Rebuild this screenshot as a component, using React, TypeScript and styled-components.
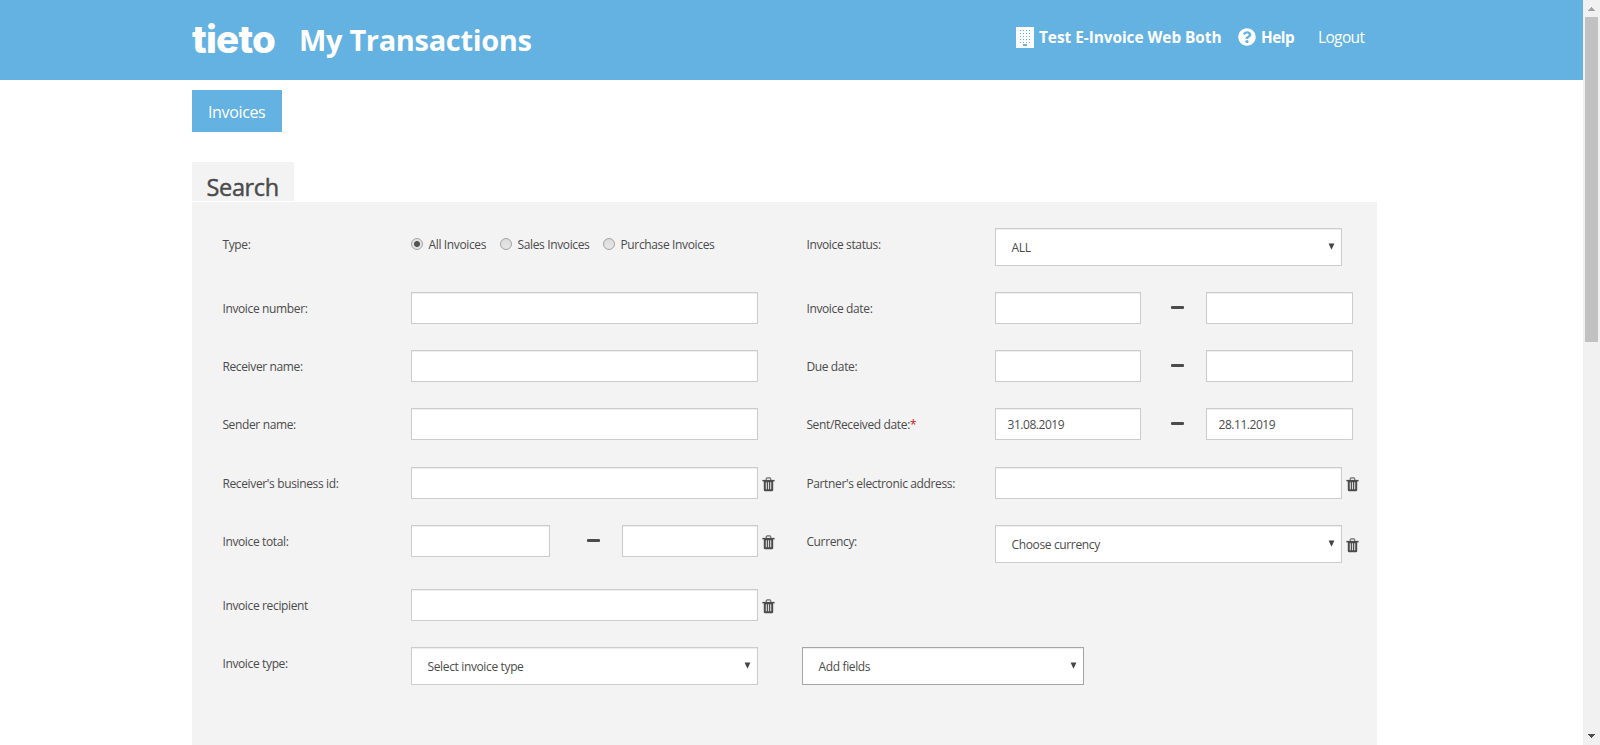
import React from "react";
import styled, { createGlobalStyle, css } from "styled-components";
import { FaQuestionCircle } from "react-icons/fa";

const BLUE = "#63b2e2";
const INK = "#4b4b4b";

const GlobalStyle = createGlobalStyle`
  *, *::before, *::after { box-sizing: border-box; }
  body {
    margin: 0;
    background: #fff;
    color: ${INK};
    font-family: "Open Sans", "Noto Sans", sans-serif;
    font-size: 12px;
    letter-spacing: -0.36px;
  }
`;

const Window = styled.div`
  display: flex;
  height: 745px;
  overflow: hidden;
`;

const Page = styled.div`
  flex: 1;
  display: flex;
  flex-direction: column;
  min-width: 0;
`;

const Header = styled.header`
  height: 80px;
  flex: none;
  background: ${BLUE};
  color: #fff;
`;

const Container = styled.div`
  width: 1185px;
  margin-left: 192px;
`;

const HeaderBar = styled(Container)`
  display: flex;
  align-items: flex-start;
  height: 80px;
`;

const Logo = styled.div`
  width: 107px;
  padding-top: 17px;
  font: 800 38.5px/44px Inter, sans-serif;
  letter-spacing: -0.75px;
`;

const Title = styled.h1`
  flex: 1;
  margin: 0;
  padding-top: 20px;
  font-size: 29px;
  line-height: 40px;
  font-weight: 700;
  letter-spacing: -0.33px;
`;

const UserNav = styled.nav`
  display: flex;
  width: 361px;
  padding-top: 27px;
  line-height: 21px;
  white-space: nowrap;
`;

const Company = styled.a`
  display: flex;
  gap: 5px;
  width: 222px;
  font-size: 15.4px;
  line-height: 22px;
  font-weight: 700;
  letter-spacing: -0.04px;
`;

const HelpLink = styled.a`
  display: flex;
  gap: 5px;
  width: 80px;
  font-size: 15.3px;
  line-height: 20px;
  font-weight: 700;
  letter-spacing: -0.5px;
  svg { margin-top: 1px; }
`;

const LogoutLink = styled.a`
  font-size: 15.5px;
  line-height: 20px;
  letter-spacing: -0.65px;
`;

const NavTab = styled.a`
  display: block;
  width: 90px;
  height: 42px;
  margin-top: 10px;
  padding-left: 16px;
  background: ${BLUE};
  color: #fff;
  font-size: 16px;
  line-height: 44px;
  letter-spacing: -0.36px;
`;

const PanelTab = styled.h2`
  width: 102px;
  height: 39px;
  margin: 30px 0 1px;
  padding-left: 14.5px;
  background: #f3f3f3;
  font-size: 23.5px;
  line-height: 50px;
  font-weight: 400;
  -webkit-text-stroke: 0.45px ${INK};
  letter-spacing: -0.35px;
`;

const Panel = styled.form`
  display: grid;
  grid-template-columns: 189px 395px 189px 1fr;
  grid-template-rows: 38px 32px 32px 33px 32px 38px 32px 38px;
  row-gap: 26px;
  align-items: start;
  height: 560px;
  padding: 26px 0 0 30px;
  background: #f3f3f3;
`;

const Label = styled.label`
  padding-left: 0.4px;
  line-height: 34px;
  white-space: nowrap;
`;

const Required = styled.span`
  color: #c4161c;
`;

const Field = styled.div`
  display: flex;
  align-items: flex-start;
`;

const box = css`
  background: #fff;
  border: 1px solid #ccc;
  box-shadow: inset 0 1px 1px rgba(0, 0, 0, 0.075);
`;

const TextBox = styled.div<{ $w?: number }>`
  ${box}
  width: ${(p) => p.$w ?? 347}px;
  height: 32px;
  padding-left: 11.5px;
  line-height: 32px;
  letter-spacing: -0.46px;
`;

const SelectBox = styled.div<{ $w?: number; $strong?: boolean }>`
  ${box}
  display: flex;
  justify-content: space-between;
  width: ${(p) => p.$w ?? 347}px;
  height: 38px;
  padding: 0 6px 0 15.5px;
  line-height: 38px;
  ${(p) => p.$strong && "border-color: #a5a5a5;"}
  svg { margin-top: 14px; }
`;

const Dash = styled.span<{ $before: number }>`
  width: 13px;
  height: 3px;
  margin: 14px 22px 0 ${(p) => p.$before}px;
  border-radius: 1px;
  background: ${INK};
`;

const Radios = styled.div`
  display: flex;
  line-height: 34px;
`;

const RadioOption = styled.label<{ $w: number }>`
  display: flex;
  gap: 5.5px;
  width: ${(p) => p.$w}px;
  white-space: nowrap;
`;

const RadioMark = styled.span<{ $on?: boolean }>`
  flex: none;
  width: 12px;
  height: 12px;
  margin-top: 10px;
  border: 1px solid #a3a3a3;
  border-radius: 50%;
  background: ${(p) =>
    p.$on
      ? "radial-gradient(circle, #555 0 2.6px, #e4e4e4 3.4px)"
      : "linear-gradient(#dcdcdc, #e6e6e6)"};
`;

const TrashButton = styled.span<{ $top?: number }>`
  margin: ${(p) => p.$top ?? 10}px 0 0 4px;
  line-height: 0;
`;

const AddFields = styled.div`
  grid-column: 3 / 5;
  margin-left: -4px;
`;

const Blank = styled.div`
  grid-column: 3 / 5;
`;

const Scrollbar = styled.div`
  display: flex;
  flex-direction: column;
  align-items: center;
  width: 17px;
  padding: 7px 0;
  background: #f1f1f1;
`;

const Thumb = styled.div`
  width: 13px;
  height: 325px;
  margin: 6px 0 auto;
  background: #c1c1c1;
`;

const Caret = () => (
  <svg width="7" height="7" viewBox="0 0 7 7">
    <path d="M0.6 0.6h5.8L3.5 6.8z" fill="#444" />
  </svg>
);

const Trash = ({ top }: { top?: number }) => (
  <TrashButton $top={top}>
    <svg width="13" height="15" viewBox="0 0 13 15">
      <path d="M4.2 3.4V2q0-1.1 1.1-1.1h2.4q1.1 0 1.1 1.1v1.4" fill="none" stroke="#6a6a6a" strokeWidth="1.1" />
      <rect x="0.4" y="2.9" width="12.2" height="1.5" fill={INK} />
      <path d="M1.8 4h9.4v9q0 1.3-1.3 1.3H3.1q-1.3 0-1.3-1.3z" fill={INK} />
      <path d="M4.3 5.3v7M6.5 5.3v7M8.7 5.3v7" stroke="#dcdcdc" strokeWidth="1.1" />
    </svg>
  </TrashButton>
);

const Building = () => (
  <svg width="18" height="21" viewBox="0 0 18 21">
    <rect width="18" height="21" fill="#fff" />
    {[3, 6, 9, 12, 15].map((y) =>
      [4, 7, 10, 13].map((x) => <rect key={`${x}-${y}`} x={x} y={y} width="1" height="1" fill={BLUE} />)
    )}
    <rect x="7" y="17" width="4" height="2" fill={BLUE} />
  </svg>
);

const ScrollArrow = ({ down }: { down?: boolean }) => (
  <svg width="7" height="4" viewBox="0 0 7 4" shapeRendering="crispEdges">
    <path d={down ? "M0 0h7v1h-1v1h-1v1h-1v1h-1v-1h-1v-1h-1v-1h-1z" : "M0 4h7v-1h-1v-1h-1v-1h-1v-1h-1v1h-1v1h-1v1h-1z"} fill={down ? "#505050" : "#a3a3a3"} />
  </svg>
);

const DateRange = ({ from, to }: { from?: string; to?: string }) => (
  <Field>
    <TextBox $w={146}>{from}</TextBox>
    <Dash $before={30} />
    <TextBox $w={147}>{to}</TextBox>
  </Field>
);

export default function App() {
  return (
    <Window>
      <GlobalStyle />
      <Page>
        <Header>
          <HeaderBar>
            <Logo>tieto</Logo>
            <Title>My Transactions</Title>
            <UserNav>
              <Company><Building />Test E-Invoice Web Both</Company>
              <HelpLink><FaQuestionCircle size={18} />Help</HelpLink>
              <LogoutLink>Logout</LogoutLink>
            </UserNav>
          </HeaderBar>
        </Header>
        <Container>
          <NavTab>Invoices</NavTab>
          <PanelTab>Search</PanelTab>
          <Panel>
            <Label>Type:</Label>
            <Radios>
              <RadioOption $w={89}><RadioMark $on />All Invoices</RadioOption>
              <RadioOption $w={103}><RadioMark />Sales Invoices</RadioOption>
              <RadioOption $w={115}><RadioMark />Purchase Invoices</RadioOption>
            </Radios>
            <Label>Invoice status:</Label>
            <SelectBox>ALL<Caret /></SelectBox>

            <Label>Invoice number:</Label>
            <TextBox />
            <Label>Invoice date:</Label>
            <DateRange />

            <Label>Receiver name:</Label>
            <TextBox />
            <Label>Due date:</Label>
            <DateRange />

            <Label>Sender name:</Label>
            <TextBox />
            <Label>Sent/Received date:<Required>*</Required></Label>
            <DateRange from="31.08.2019" to="28.11.2019" />

            <Label>Receiver's business id:</Label>
            <Field><TextBox /><Trash /></Field>
            <Label>Partner's electronic address:</Label>
            <Field><TextBox /><Trash /></Field>

            <Label>Invoice total:</Label>
            <Field>
              <TextBox $w={139} />
              <Dash $before={37} />
              <TextBox $w={136} />
              <Trash />
            </Field>
            <Label>Currency:</Label>
            <Field><SelectBox>Choose currency<Caret /></SelectBox><Trash top={13} /></Field>

            <Label>Invoice recipient</Label>
            <Field><TextBox /><Trash /></Field>
            <Blank />

            <Label>Invoice type:</Label>
            <SelectBox>Select invoice type<Caret /></SelectBox>
            <AddFields>
              <SelectBox $w={282} $strong>Add fields<Caret /></SelectBox>
            </AddFields>
          </Panel>
        </Container>
      </Page>
      <Scrollbar>
        <ScrollArrow />
        <Thumb />
        <ScrollArrow down />
      </Scrollbar>
    </Window>
  );
}
